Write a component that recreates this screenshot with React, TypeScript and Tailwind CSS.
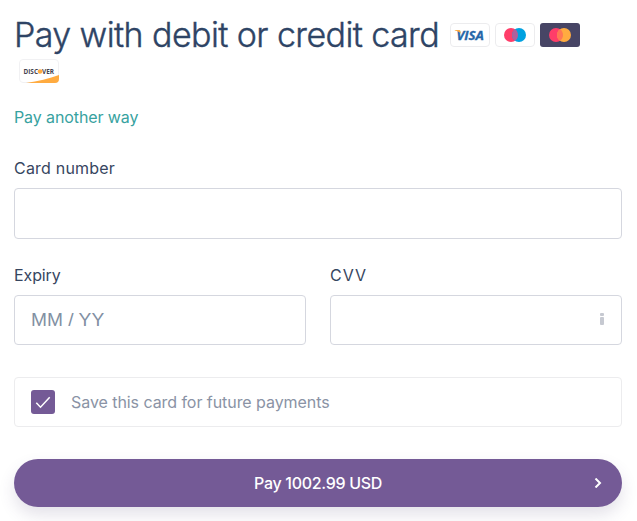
import { useState } from 'react';

interface FieldProps {
  label: string;
  labelClass: string;
  placeholder?: string;
  height: string;
  hasInfo?: boolean;
}

const badge = 'inline-block ml-[5px] h-6 w-10 align-baseline';

function VisaBadge() {
  return (
    <svg className={badge} viewBox="0 0 40 24">
      <rect x="0.5" y="0.5" width="39" height="23" rx="3.5" fill="#fff" stroke="#ececee" />
      <text x="6.4" y="16.5" textLength="27.6" lengthAdjust="spacingAndGlyphs" fontFamily="Open Sans, sans-serif" fontSize="12.8" fontWeight="700" fontStyle="italic" fill="#2566a8" stroke="#2566a8" strokeWidth="0.3">VISA</text>
      <path d="M4.8 7h4.1c.8 0 1.2.4 1.4 1l.9 3C9.8 9.2 7.6 8 4.8 7.5z" fill="#ffab40" />
    </svg>
  );
}

function MaestroBadge() {
  return (
    <svg className={badge} viewBox="0 0 40 24">
      <rect x="0.5" y="0.5" width="39" height="23" rx="3.5" fill="#fff" stroke="#ececee" />
      <circle cx="16" cy="12" r="7" fill="#ff3d69" />
      <circle cx="24" cy="12" r="7" fill="#00a1e0" />
      <path d="M20 6.26a7 7 0 0 1 0 11.48a7 7 0 0 1 0-11.48z" fill="#b0609c" />
    </svg>
  );
}

function MastercardBadge() {
  return (
    <svg className={badge} viewBox="0 0 40 24">
      <rect width="40" height="24" rx="3" fill="#474565" />
      <circle cx="16" cy="12" r="7" fill="#ff3d69" />
      <circle cx="24" cy="12" r="7" fill="#ffab40" />
      <path d="M20 6.26a7 7 0 0 1 0 11.48a7 7 0 0 1 0-11.48z" fill="#ff7655" />
    </svg>
  );
}

function DiscoverBadge() {
  return (
    <svg className={badge} viewBox="0 0 40 24">
      <rect x="0.5" y="0.5" width="39" height="23" rx="3.5" fill="#fff" stroke="#f1f1f3" />
      <path d="M7 24C19 22.3 30 19.8 40 16v4a4 4 0 0 1-4 4z" fill="#ffab40" />
      <g fontFamily="Open Sans, sans-serif" fontSize="6.4" fontWeight="700" fill="#45434f">
        <text x="4.5" y="14.8" textLength="14.5" lengthAdjust="spacingAndGlyphs">DISC</text>
        <text x="23" y="14.8" textLength="12" lengthAdjust="spacingAndGlyphs">VER</text>
      </g>
      <circle cx="21" cy="12.5" r="2.3" fill="#ffab40" />
    </svg>
  );
}

function Field({ label, labelClass, placeholder, height, hasInfo }: FieldProps) {
  return (
    <label className="block flex-1">
      <span className={`block h-6 text-[16px] leading-6 text-[#37465f] ${labelClass}`}>{label}</span>
      <span className={`mt-2 flex items-center rounded-[4px] border border-[#d5d7df] bg-white px-4 ${height}`}>
        <input
          type="text"
          placeholder={placeholder}
          className="w-full min-w-0 font-['Liberation_Sans',Arial,sans-serif] text-[19.2px] outline-none placeholder:text-[#8290a3]"
        />
        {hasInfo && (
          <svg className="mr-px mb-0.5 h-3 w-1 shrink-0" viewBox="0 0 4 12" fill="#c6c9d1">
            <rect width="4" height="3" rx="1" />
            <rect y="4" width="4" height="8" rx="1" />
          </svg>
        )}
      </span>
    </label>
  );
}

function App() {
  const [saveCard, setSaveCard] = useState(true);

  return (
    <div className="h-[521px] w-[636px] overflow-hidden bg-white px-[14px] pt-[17px] font-['Inter',sans-serif] text-[#2e4465]">
      <div className="h-[72px] text-[34px] leading-9">
        <h1 className="mr-[6px] inline text-[34px] font-light tracking-[-0.59px] [-webkit-text-stroke:0.4px_#2e4465]">Pay with debit or credit card</h1>
        <span className="text-[0px] leading-[0]">
          {' '}<VisaBadge /> <MaestroBadge /> <MastercardBadge /> <DiscoverBadge />
        </span>
      </div>

      <a href="#" className="mt-[16px] block h-6 text-[16px] leading-6 tracking-[-0.1px] text-[#37a2a0]">Pay another way</a>

      <form className="mt-[27px]" onSubmit={(e) => e.preventDefault()}>
        <Field label="Card number" labelClass="tracking-[0.2px]" height="h-[51px]" />

        <div className="mt-6 flex gap-6">
          <Field label="Expiry" labelClass="tracking-[-0.1px]" placeholder="MM / YY" height="h-[50px]" />
          <Field label="CVV" labelClass="tracking-[1px]" height="h-[50px]" hasInfo />
        </div>

        <label className="mt-8 flex h-[50px] items-center rounded-[4px] border border-[#ececee] px-4 text-[16px] text-[#8a93a5]">
          <input type="checkbox" className="sr-only" checked={saveCard} onChange={(e) => setSaveCard(e.target.checked)} />
          <span className="flex size-6 items-center justify-center rounded-[3px] bg-[#745a96]">
            {saveCard && (
              <svg className="size-6" viewBox="0 0 24 24" fill="none" stroke="#fff" strokeWidth="1.5">
                <path d="M5.3 12.8l4.2 4.4L18.7 7.2" />
              </svg>
            )}
          </span>
          <span className="ml-4 tracking-[-0.06px]">Save this card for future payments</span>
        </label>

        <button type="submit" className="mt-8 flex h-12 w-full items-center rounded-full bg-[#745a96] px-[19px] text-[16px] font-medium text-white shadow-[0_8px_16px_rgba(72,60,110,0.15)]">
          <span className="ml-[10px] flex-1 text-center tracking-[-0.3px]">Pay 1002.99 USD</span>
          <svg className="size-[10px]" viewBox="0 0 10 10" fill="none" stroke="#fff" strokeWidth="2">
            <path d="M2.5 0.5L7 5L2.5 9.5" />
          </svg>
        </button>
      </form>
    </div>
  );
}

export default App;
